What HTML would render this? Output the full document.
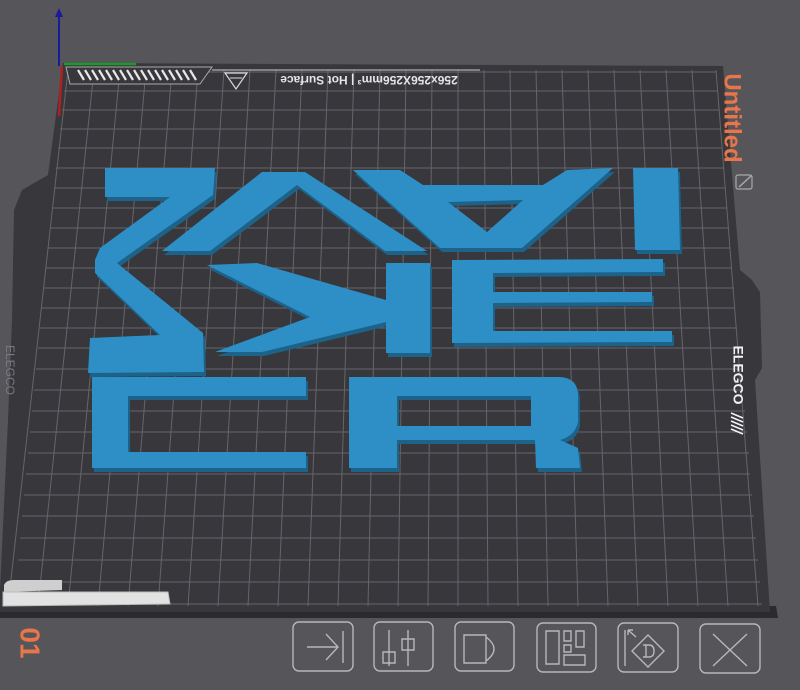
<!DOCTYPE html>
<html><head><meta charset="utf-8"><style>
html,body{margin:0;padding:0;background:#56555a;width:800px;height:690px;overflow:hidden}
svg{display:block}
</style></head><body>
<svg width="800" height="690" viewBox="0 0 800 690" xmlns="http://www.w3.org/2000/svg" font-family="Liberation Sans, sans-serif">
<rect width="800" height="690" fill="#56555a"/>
<polygon points="0,606 776,606 778,618 0,618" fill="#2b2a2e"/>
<polygon points="63,63 723,66 740,270 752,280 760,292 762,368 755,380 770,612 0,612 0,590 8,420 12,320 14,210 22,190 48,175" fill="#38373c"/>
<g stroke="#66656b" stroke-width="1" fill="none">
<g>
<line x1="68" y1="70" x2="8" y2="606"/><line x1="94" y1="70" x2="38" y2="606"/><line x1="120" y1="70" x2="68" y2="606"/><line x1="146" y1="70" x2="98" y2="606"/><line x1="172" y1="70" x2="128" y2="606"/><line x1="198" y1="70" x2="158" y2="606"/><line x1="224" y1="70" x2="188" y2="606"/><line x1="250" y1="70" x2="218" y2="606"/><line x1="276" y1="70" x2="248" y2="606"/><line x1="302" y1="70" x2="278" y2="606"/><line x1="328" y1="70" x2="308" y2="606"/><line x1="354" y1="70" x2="338" y2="606"/><line x1="380" y1="70" x2="368" y2="606"/><line x1="406" y1="70" x2="398" y2="606"/><line x1="432" y1="70" x2="428" y2="606"/><line x1="458" y1="70" x2="458" y2="606"/><line x1="484" y1="70" x2="488" y2="606"/><line x1="510" y1="70" x2="518" y2="606"/><line x1="536" y1="70" x2="548" y2="606"/><line x1="562" y1="70" x2="578" y2="606"/><line x1="588" y1="70" x2="608" y2="606"/><line x1="614" y1="70" x2="638" y2="606"/><line x1="640" y1="70" x2="668" y2="606"/><line x1="666" y1="70" x2="698" y2="606"/><line x1="692" y1="70" x2="728" y2="606"/><line x1="716" y1="70" x2="758" y2="606"/>
</g>
<g>
<line x1="66" y1="72" x2="716" y2="72"/><line x1="64" y1="91" x2="718" y2="91"/><line x1="62" y1="110" x2="719" y2="110"/><line x1="60" y1="129" x2="721" y2="129"/><line x1="58" y1="148" x2="722" y2="148"/><line x1="56" y1="168" x2="724" y2="168"/><line x1="54" y1="188" x2="725" y2="188"/><line x1="52" y1="208" x2="727" y2="208"/><line x1="50" y1="228" x2="729" y2="228"/><line x1="48" y1="248" x2="730" y2="248"/><line x1="46" y1="268" x2="732" y2="268"/><line x1="44" y1="288" x2="734" y2="288"/><line x1="42" y1="308" x2="735" y2="308"/><line x1="40" y1="328" x2="737" y2="328"/><line x1="38" y1="348" x2="739" y2="348"/><line x1="36" y1="369" x2="741" y2="369"/><line x1="34" y1="390" x2="743" y2="390"/><line x1="32" y1="411" x2="745" y2="411"/><line x1="30" y1="432" x2="747" y2="432"/><line x1="28" y1="453" x2="749" y2="453"/><line x1="26" y1="474" x2="750" y2="474"/><line x1="24" y1="495" x2="752" y2="495"/><line x1="22" y1="516" x2="754" y2="516"/><line x1="20" y1="538" x2="756" y2="538"/><line x1="18" y1="560" x2="758" y2="560"/><line x1="14" y1="582" x2="760" y2="582"/><line x1="10" y1="604" x2="762" y2="604"/>
</g>
</g>
<polygon points="66,67 212,67 200,84 70,84" fill="#38373c" stroke="#aaa" stroke-width="1"/>
<g stroke="#e8e8e8" stroke-width="2.2">
<line x1="78" y1="70" x2="84" y2="80"/><line x1="85" y1="70" x2="91" y2="80"/><line x1="92" y1="70" x2="98" y2="80"/><line x1="99" y1="70" x2="105" y2="80"/><line x1="106" y1="70" x2="112" y2="80"/><line x1="113" y1="70" x2="119" y2="80"/><line x1="120" y1="70" x2="126" y2="80"/><line x1="127" y1="70" x2="133" y2="80"/><line x1="134" y1="70" x2="140" y2="80"/><line x1="141" y1="70" x2="147" y2="80"/><line x1="148" y1="70" x2="154" y2="80"/><line x1="155" y1="70" x2="161" y2="80"/><line x1="162" y1="70" x2="168" y2="80"/><line x1="169" y1="70" x2="175" y2="80"/><line x1="176" y1="70" x2="182" y2="80"/><line x1="183" y1="70" x2="189" y2="80"/><line x1="190" y1="70" x2="196" y2="80"/>
</g>
<line x1="212" y1="70" x2="480" y2="70" stroke="#ccc" stroke-width="1"/>
<polygon points="225,73 247,73 236,89" fill="none" stroke="#ddd" stroke-width="1.2"/>
<line x1="230" y1="78" x2="242" y2="78" stroke="#ddd" stroke-width="1"/>
<text x="369" y="78" transform="rotate(180 369 77)" font-size="12" fill="#e6e6e6" text-anchor="middle" font-weight="bold">256x256X256mm³ | Hot Surface</text>
<line x1="59" y1="66" x2="59" y2="14" stroke="#1a1aa0" stroke-width="2"/>
<polygon points="55,17 63,17 59,8" fill="#1a1aa0"/>
<line x1="64" y1="64" x2="136" y2="64" stroke="#1f9a2a" stroke-width="2.5"/>
<line x1="62" y1="66" x2="59" y2="116" stroke="#b02020" stroke-width="2.5"/>
<defs>
<g id="L">
<polygon points="105,168 215,168 213,195 117,263 203,333 204,372 88,373 90,338 160,335 95,273 95,260 100,248 170,197 105,197"/>
<polygon points="162,251 210,251 297,185 385,251 427,251 305,172 262,172"/>
<path fill-rule="evenodd" d="M353,170 L400,170 L423,185 L543,185 L567,170 L613,168 L522,248 L440,248 Z M448,202 L523,200 L487,232 Z"/>
<polygon points="633,168 678,168 680,250 635,250"/>
<polygon points="207,265 257,263 386,300 386,263 430,263 430,353 386,353 386,322 262,352 215,352 310,317"/>
<path d="M452,260 L663,259 L663,272 L493,273 L493,292 L652,292 L652,302 L493,303 L493,331 L672,331 L672,342 L452,343 Z"/>
<path fill-rule="evenodd" d="M92,377 L306,377 L306,396 L128,396 L128,452 L306,452 L306,468 L92,468 Z"/>
<path fill-rule="evenodd" d="M349,377 L560,377 Q578,378 578,396 L578,422 Q575,436 560,440 L578,448 L580,468 L536,468 L535,440 L397,440 L397,468 L349,468 Z M397,396 L531,396 L531,426 L397,426 Z"/>
</g>
</defs>
<use href="#L" fill="#1d6288" transform="translate(2,4)"/>
<use href="#L" fill="#2e8fc7"/>
<text x="731" y="118" transform="rotate(90 731 118)" font-size="24" font-weight="bold" fill="#e8764a" text-anchor="middle" dominant-baseline="middle">Untitled</text>
<rect x="736" y="175" width="16" height="14" rx="2" fill="none" stroke="#aaa" stroke-width="1.2"/>
<line x1="739" y1="187" x2="751" y2="176" stroke="#aaa" stroke-width="1.5"/>
<text x="737" y="375" transform="rotate(90 737 375)" font-size="14" font-weight="bold" fill="#f2f2f2" text-anchor="middle" dominant-baseline="middle">ELEGCO</text>
<g stroke="#f2f2f2" stroke-width="1.6"><line x1="731" y1="413" x2="743" y2="418"/><line x1="731" y1="417" x2="743" y2="422"/><line x1="731" y1="421" x2="743" y2="426"/><line x1="731" y1="425" x2="743" y2="430"/><line x1="731" y1="429" x2="743" y2="434"/></g>
<text x="9" y="370" transform="rotate(90 9 370)" font-size="12" fill="#7a797f" text-anchor="middle" dominant-baseline="middle">ELEGCO</text>
<path d="M4,585 Q6,580 14,580 L62,580 L62,590 L4,592 Z" fill="#cfcfcf"/>
<path d="M3,592 L168,592 L170,604 L3,606 Z" fill="#e2e2e2" stroke="#bbb" stroke-width="1"/>
<text x="28" y="643" transform="rotate(90 28 643)" font-size="28" font-weight="bold" fill="#e8764a" text-anchor="middle" dominant-baseline="middle">01</text>
<g fill="none" stroke="#b8b8b8" stroke-width="1.4">
<rect x="293" y="622" width="60" height="49" rx="6"/>
<rect x="374" y="622" width="59" height="49" rx="6"/>
<rect x="455" y="622" width="59" height="49" rx="6"/>
<rect x="537" y="623" width="59" height="49" rx="6"/>
<rect x="618" y="623" width="60" height="49" rx="6"/>
<rect x="700" y="624" width="60" height="49" rx="6"/>
<path d="M307,647 L338,647 M326,634 L338,647 L326,660 M343,631 L343,663"/>
<path d="M389,630 L389,666 M383,652 h12 v11 h-12 z M408,630 L408,666 M402,639 h12 v11 h-12 z"/>
<path d="M464,635 h22 v28 h-22 z M486,637 Q502,649 486,661"/>
<path d="M546,631 h13 v33 h-13 z M564,631 h7 v10 h-7 z M564,645 h7 v7 h-7 z M576,631 h8 v16 h-8 z M564,655 h21 v10 h-21 z"/>
<path d="M625,630 L625,666 M648,635 L664,651 L648,667 L632,651 Z M643,645 h6 q5,0 5,6 q0,6 -5,6 h-6 M646,645 v12 M628,630 L636,637 M628,630 v5 M628,630 h5"/>
<path d="M713,634 L747,666 M747,634 L713,666"/>
</g>
</svg>
</body></html>
